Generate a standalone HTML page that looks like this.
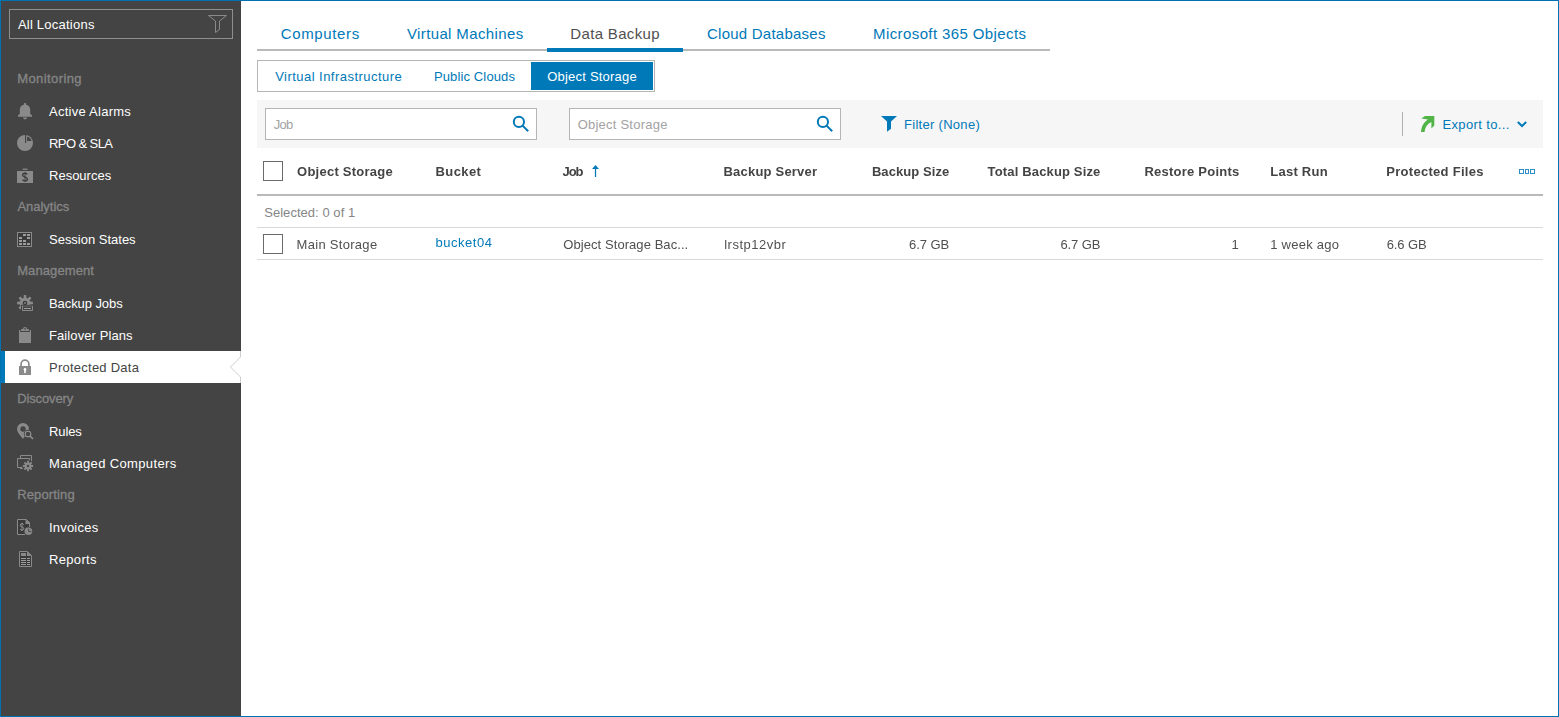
<!DOCTYPE html>
<html><head><meta charset="utf-8"><title>Protected Data</title>
<style>
*{box-sizing:border-box;margin:0;padding:0}
html,body{width:1559px;height:717px;overflow:hidden;background:#fff}
body{font-family:"Liberation Sans",sans-serif;font-size:13px;position:relative}
.t{position:absolute;white-space:pre;line-height:20px;height:20px}
.abs{position:absolute}
#side{left:0;top:0;width:241px;height:717px;background:#444444}
#frame{left:0;top:0;width:1559px;height:717px;border:1px solid #0072b1;pointer-events:none}
svg{position:absolute;overflow:visible}
</style></head>
<body>
<nav>
<div id="side" class="abs"></div>
<div class="abs" style="left:9px;top:9px;width:224px;height:30px;border:1px solid #8f8f8f"></div>
<svg style="left:0;top:0" width="241" height="45"><path d="M208.5,15.5H226.5L219.5,21V29.5L215.5,32.5V21Z" fill="none" stroke="#8a8a8a" stroke-width="1"/></svg>
<div class="abs" style="left:1px;top:351px;width:240px;height:32px;background:#fff;border-left:4px solid #0079b8"></div>
<svg style="left:225px;top:351px" width="16" height="32"><path d="M15.5,0V6L5.5,16L15.5,26V32" fill="none" stroke="#cfcfcf" stroke-width="1"/></svg>
<svg style="left:17px;top:103px" width="16" height="16" viewBox="0 0 16 16"><path fill="#8a8a8a" d="M7.1,0h1.8v1.4c2.5,0.5 4.3,2.6 4.3,5.2V11l1.8,1.2v1.6H1v-1.6L2.8,11V6.6c0,-2.6 1.8,-4.7 4.3,-5.2z M6,14.4h4c0,1 -0.9,1.8 -2,1.8s-2,-0.8 -2,-1.8z"/></svg>
<svg style="left:17px;top:135px" width="16" height="16" viewBox="0 0 16 16"><circle cx="8" cy="8" r="8" fill="#8a8a8a"/><rect x="8" y="-0.2" width="1.1" height="8.2" fill="#444444"/><path d="M10,1.4A6.3,6.3 0 0 1 14.6,6H10Z" fill="#444444"/></svg>
<svg style="left:17px;top:167px" width="16" height="16" viewBox="0 0 16 16"><rect x="0" y="4" width="16" height="12" fill="#8a8a8a"/><path d="M5.4,3V2.4q0,-1 1,-1h3.2q1,0 1,1V3z" fill="#8a8a8a" opacity="0.85"/><path d="M10.25,7.43 C9.50,6.51 8.62,6.20 8.00,6.20 C6.50,6.20 5.62,7.12 5.62,8.28 C5.62,9.43 7.00,9.74 8.00,10.05 C9.25,10.44 10.38,10.82 10.38,11.90 C10.38,13.13 9.25,13.90 8.00,13.90 C7.00,13.90 6.12,13.52 5.55,12.67" fill="none" stroke="#3c3c3c" stroke-width="1.35"/><path d="M8,5.3V14.8" stroke="#3c3c3c" stroke-width="0.9"/></svg>
<svg style="left:17px;top:231px" width="16" height="16" viewBox="0 0 16 16"><rect x="0.5" y="1.5" width="14" height="14" fill="#3a3a3a" stroke="#8a8a8a"/><rect x="6" y="3" width="3" height="2" fill="#9c9c9c"/><rect x="10" y="3" width="3" height="2" fill="#9c9c9c"/><rect x="2" y="6" width="3" height="2" fill="#9c9c9c"/><rect x="10" y="6" width="3" height="2" fill="#9c9c9c"/><rect x="2" y="9" width="3" height="2" fill="#9c9c9c"/><rect x="6" y="9" width="3" height="2" fill="#9c9c9c"/><rect x="2" y="12" width="3" height="2" fill="#9c9c9c"/><rect x="6" y="12" width="3" height="2" fill="#9c9c9c"/><rect x="10" y="12" width="3" height="2" fill="#9c9c9c"/></svg>
<svg style="left:17px;top:295px" width="16" height="16" viewBox="0 0 16 16"><path d="M6.61,2.99 L6.80,0.09 L9.20,0.09 L9.39,2.99 L10.56,3.48 L12.75,1.56 L14.44,3.25 L12.52,5.44 L13.01,6.61 L15.91,6.80 L15.91,9.20 L13.01,9.39 L12.52,10.56 L14.44,12.75 L12.75,14.44 L10.56,12.52 L9.39,13.01 L9.20,15.91 L6.80,15.91 L6.61,13.01 L5.44,12.52 L3.25,14.44 L1.56,12.75 L3.48,10.56 L2.99,9.39 L0.09,9.20 L0.09,6.80 L2.99,6.61 L3.48,5.44 L1.56,3.25 L3.25,1.56 L5.44,3.48Z" fill="#8a8a8a"/><circle cx="8" cy="8" r="2.3" fill="#3a3a3a"/><circle cx="8" cy="8" r="0.9" fill="#8a8a8a"/><rect x="4" y="9.8" width="13" height="7" fill="#444444"/><rect x="5" y="10.6" width="11" height="1" fill="#666"/><path d="M5.5,11V15.5H15.5V11" fill="none" stroke="#8a8a8a"/><rect x="7" y="13" width="7" height="1" fill="#9c9c9c"/><rect x="2.2" y="12" width="1.6" height="1.6" fill="#8a8a8a"/></svg>
<svg style="left:17px;top:327px" width="16" height="16" viewBox="0 0 16 16"><path fill="#8a8a8a" d="M2,3h1.2v2h9.6v-2H14V16H2z"/><rect x="4.2" y="2" width="7.6" height="2" fill="#8a8a8a"/><circle cx="8" cy="2" r="2" fill="#8a8a8a"/><circle cx="8" cy="1.9" r="0.8" fill="#444444"/></svg>
<svg style="left:17px;top:359px" width="16" height="16" viewBox="0 0 16 16"><rect x="2" y="7" width="12" height="9" fill="#8a8a8a"/><path d="M4.1,7.5V5a3.9,3.9 0 0 1 7.8,0V7.5" fill="none" stroke="#8a8a8a" stroke-width="1.7"/><circle cx="8" cy="10.4" r="1.3" fill="#fff"/><rect x="7.2" y="10.5" width="1.6" height="3.6" fill="#fff"/></svg>
<svg style="left:17px;top:423px" width="16" height="16" viewBox="0 0 16 16"><path fill="#8a8a8a" d="M6,0a6,6 0 0 1 6,6c0,3.5 -4,7 -6,10C4,13 0,9.5 0,6a6,6 0 0 1 6,-6z"/><circle cx="6" cy="6" r="2.7" fill="#444444"/><circle cx="11" cy="11" r="4.2" fill="#444444"/><circle cx="11" cy="11" r="2.8" fill="none" stroke="#959595" stroke-width="1.1"/><path d="M13,13L16,16" stroke="#959595" stroke-width="1.4"/></svg>
<svg style="left:17px;top:455px" width="16" height="16" viewBox="0 0 16 16"><path d="M3.5,3V0.5H14.5V6.5" fill="none" stroke="#8a8a8a"/><path d="M0.5,3.5H12.5V8M0.5,3.5V12.5H6" fill="none" stroke="#8a8a8a"/><path d="M3,13.5h3.2" stroke="#8a8a8a"/><circle cx="11" cy="11" r="6" fill="#444444"/><path d="M10.00,7.75 L10.12,5.87 L11.88,5.87 L12.00,7.75 L12.59,7.99 L14.00,6.75 L15.25,8.00 L14.01,9.41 L14.25,10.00 L16.13,10.12 L16.13,11.88 L14.25,12.00 L14.01,12.59 L15.25,14.00 L14.00,15.25 L12.59,14.01 L12.00,14.25 L11.88,16.13 L10.12,16.13 L10.00,14.25 L9.41,14.01 L8.00,15.25 L6.75,14.00 L7.99,12.59 L7.75,12.00 L5.87,11.88 L5.87,10.12 L7.75,10.00 L7.99,9.41 L6.75,8.00 L8.00,6.75 L9.41,7.99Z" fill="#8a8a8a"/><circle cx="11" cy="11" r="1.2" fill="#444444"/></svg>
<svg style="left:17px;top:519px" width="16" height="16" viewBox="0 0 16 16"><rect x="1" y="1" width="11.5" height="14.5" fill="#3a3a3a"/><path d="M0.5,0.5H9.5L12.5,3.5V9" fill="none" stroke="#8a8a8a"/><path d="M0.5,0.5V15.5H8" fill="none" stroke="#8a8a8a"/><path d="M8.5,0.5V5H13V4z" fill="#8a8a8a"/><path d="M6.71,5.66 C6.14,4.86 5.47,4.60 5.00,4.60 C3.86,4.60 3.20,5.39 3.20,6.38 C3.20,7.37 4.24,7.64 5.00,7.90 C5.95,8.23 6.80,8.56 6.80,9.48 C6.80,10.54 5.95,11.20 5.00,11.20 C4.24,11.20 3.58,10.87 3.14,10.14" fill="none" stroke="#9a9a9a" stroke-width="1.0"/><path d="M5,3.8V12.0" stroke="#9a9a9a" stroke-width="0.8"/><circle cx="11.4" cy="12.2" r="4.5" fill="#444444"/><circle cx="11.4" cy="12.2" r="3.8" fill="#8a8a8a"/><path d="M11.7,9.6V12.6H14.4" fill="none" stroke="#444444" stroke-width="0.9"/></svg>
<svg style="left:17px;top:551px" width="16" height="16" viewBox="0 0 16 16"><path d="M2.5,0.5H10.5L14.5,4.5V15.5H2.5Z" fill="#3a3a3a" stroke="#8a8a8a"/><path d="M10,0.5V5H14.5z" fill="#8a8a8a"/><rect x="4" y="2" width="5" height="3" fill="#8a8a8a"/><rect x="4" y="7" width="5" height="1" fill="#9c9c9c"/><rect x="10" y="7" width="3" height="1" fill="#9c9c9c"/><rect x="4" y="9" width="5" height="1" fill="#9c9c9c"/><rect x="10" y="9" width="3" height="1" fill="#9c9c9c"/><rect x="4" y="11" width="5" height="1" fill="#9c9c9c"/><rect x="10" y="11" width="3" height="1" fill="#9c9c9c"/><rect x="4" y="13" width="5" height="1" fill="#9c9c9c"/><rect x="10" y="13" width="3" height="1" fill="#9c9c9c"/></svg>
<span class="t" style="top:14.5px;font-size:13px;color:#ffffff;letter-spacing:0.234px;left:17.88px;">All Locations</span>
<span class="t" style="top:68.5px;font-size:13px;color:#868686;letter-spacing:0.411px;left:17.20px;-webkit-text-stroke:0.3px #868686;">Monitoring</span>
<span class="t" style="top:196.5px;font-size:13px;color:#868686;letter-spacing:-0.021px;left:17.38px;-webkit-text-stroke:0.3px #868686;">Analytics</span>
<span class="t" style="top:260.5px;font-size:13px;color:#868686;letter-spacing:0.100px;left:17.20px;-webkit-text-stroke:0.3px #868686;">Management</span>
<span class="t" style="top:388.5px;font-size:13px;color:#868686;letter-spacing:-0.135px;left:17.20px;-webkit-text-stroke:0.3px #868686;">Discovery</span>
<span class="t" style="top:484.5px;font-size:13px;color:#868686;letter-spacing:0.142px;left:17.20px;-webkit-text-stroke:0.3px #868686;">Reporting</span>
<span class="t" style="top:101.5px;font-size:13px;color:#ffffff;letter-spacing:0.259px;left:48.98px;">Active Alarms</span>
<span class="t" style="top:133.5px;font-size:13px;color:#ffffff;letter-spacing:-0.582px;left:49.00px;">RPO &amp; SLA</span>
<span class="t" style="top:165.5px;font-size:13px;color:#ffffff;letter-spacing:0.005px;left:49.00px;">Resources</span>
<span class="t" style="top:229.5px;font-size:13px;color:#ffffff;letter-spacing:-0.009px;left:49.00px;">Session States</span>
<span class="t" style="top:293.5px;font-size:13px;color:#ffffff;letter-spacing:-0.080px;left:49.00px;">Backup Jobs</span>
<span class="t" style="top:325.5px;font-size:13px;color:#ffffff;letter-spacing:0.096px;left:49.00px;">Failover Plans</span>
<span class="t" style="top:357.5px;font-size:13px;color:#444444;letter-spacing:0.243px;left:49.00px;">Protected Data</span>
<span class="t" style="top:421.5px;font-size:13px;color:#ffffff;letter-spacing:-0.115px;left:49.00px;">Rules</span>
<span class="t" style="top:453.5px;font-size:13px;color:#ffffff;letter-spacing:0.362px;left:49.00px;">Managed Computers</span>
<span class="t" style="top:517.5px;font-size:13px;color:#ffffff;letter-spacing:0.224px;left:48.91px;">Invoices</span>
<span class="t" style="top:549.5px;font-size:13px;color:#ffffff;letter-spacing:0.333px;left:49.00px;">Reports</span>
</nav>
<main>
<div class="abs" style="left:257px;top:49px;width:793px;height:2px;background:#b9b9b9"></div>
<div class="abs" style="left:547px;top:48px;width:136px;height:4px;background:#0079b8"></div>
<div class="abs" style="left:257px;top:60px;width:398px;height:32px;border:1px solid #b5b5b5;background:#fff"></div>
<div class="abs" style="left:531px;top:62px;width:122px;height:28px;background:#0079b8"></div>
<div class="abs" style="left:257px;top:100px;width:1286px;height:48px;background:#f6f6f6"></div>
<div class="abs" style="left:265px;top:108px;width:272px;height:32px;border:1px solid #b5b5b5;background:#fff"></div>
<div class="abs" style="left:569px;top:108px;width:272px;height:32px;border:1px solid #b5b5b5;background:#fff"></div>
<svg style="left:513px;top:116px" width="16" height="16"><circle cx="5.9" cy="5.9" r="5.1" fill="none" stroke="#0079b8" stroke-width="2"/><path d="M9.6,9.6L15.2,15.2" stroke="#0079b8" stroke-width="2"/></svg>
<svg style="left:817px;top:116px" width="16" height="16"><circle cx="5.9" cy="5.9" r="5.1" fill="none" stroke="#0079b8" stroke-width="2"/><path d="M9.6,9.6L15.2,15.2" stroke="#0079b8" stroke-width="2"/></svg>
<svg style="left:881px;top:116px" width="16" height="16"><path d="M0,0H16L10,5.5V12.8L6,15.8V5.5Z" fill="#0079b8"/></svg>
<div class="abs" style="left:1402px;top:112px;width:1px;height:24px;background:#b0b0b0"></div>
<svg style="left:1419px;top:116px" width="16" height="16"><path d="M6,0L15.3,0L15.3,9.4L12.4,12.6L12.4,6C8.8,7.5 6,11 5.6,16L2,16C2.4,10 5,5.8 9,3.4L2.3,2.5Z" fill="#50b447"/></svg>
<svg style="left:1516px;top:120px" width="12" height="8"><path d="M1.8,2L6,6L10.2,2" fill="none" stroke="#0079b8" stroke-width="2"/></svg>
<div class="abs" style="left:263px;top:161px;width:20px;height:20px;border:1px solid #6a6a6a;background:#fff"></div>
<div class="abs" style="left:263px;top:234px;width:20px;height:20px;border:1px solid #6a6a6a;background:#fff"></div>
<svg style="left:591px;top:164px" width="10" height="14"><path d="M1,5L4.5,1L8,5Z" fill="#0079b8"/><rect x="3.9" y="4.5" width="1.25" height="8.5" fill="#0079b8"/></svg>
<svg style="left:1519px;top:169px" width="16" height="6"><rect x="0.5" y="0.5" width="4" height="4" fill="none" stroke="#2d8fc6" stroke-width="1"/><rect x="6.5" y="0.5" width="3" height="4" fill="none" stroke="#2d8fc6" stroke-width="1"/><rect x="11.5" y="0.5" width="4" height="4" fill="none" stroke="#2d8fc6" stroke-width="1"/></svg>
<div class="abs" style="left:257px;top:194px;width:1286px;height:2px;background:#b9b9b9"></div>
<div class="abs" style="left:257px;top:227px;width:1286px;height:1px;background:#d9d9d9"></div>
<div class="abs" style="left:257px;top:259px;width:1286px;height:1px;background:#d9d9d9"></div>
<span class="t" style="top:24.0px;font-size:15px;color:#0079b8;letter-spacing:0.623px;left:280.80px;">Computers</span>
<span class="t" style="top:24.0px;font-size:15px;color:#0079b8;letter-spacing:0.377px;left:406.95px;">Virtual Machines</span>
<span class="t" style="top:24.0px;font-size:15px;color:#505050;letter-spacing:0.331px;left:570.31px;">Data Backup</span>
<span class="t" style="top:24.0px;font-size:15px;color:#0079b8;letter-spacing:0.239px;left:707.00px;">Cloud Databases</span>
<span class="t" style="top:24.0px;font-size:15px;color:#0079b8;letter-spacing:0.392px;left:873.11px;">Microsoft 365 Objects</span>
<span class="t" style="top:66.5px;font-size:13px;color:#0079b8;letter-spacing:0.468px;left:275.14px;">Virtual Infrastructure</span>
<span class="t" style="top:66.5px;font-size:13px;color:#0079b8;letter-spacing:0.133px;left:433.90px;">Public Clouds</span>
<span class="t" style="top:66.5px;font-size:13px;color:#ffffff;letter-spacing:0.210px;left:547.24px;">Object Storage</span>
<span class="t" style="top:114.5px;font-size:13px;color:#a3a3a3;letter-spacing:-0.650px;left:273.65px;">Job</span>
<span class="t" style="top:114.5px;font-size:13px;color:#a3a3a3;letter-spacing:0.233px;left:577.64px;">Object Storage</span>
<span class="t" style="top:114.5px;font-size:13px;color:#0079b8;letter-spacing:0.292px;left:904.00px;">Filter (None)</span>
<span class="t" style="top:114.5px;font-size:13px;color:#0079b8;letter-spacing:0.380px;left:1442.40px;">Export to...</span>
<span class="t" style="top:202.5px;font-size:13px;color:#858585;letter-spacing:0.043px;left:264.20px;">Selected: 0 of 1</span>
</main>
<div id="frame" class="abs"></div>
<div class="abs" style="left:257px;top:150px;width:1286px;height:120px;will-change:transform">
<span class="t" style="top:11.5px;font-size:13px;color:#444444;font-weight:700;letter-spacing:0.250px;left:40.05px;">Object Storage</span>
<span class="t" style="top:11.5px;font-size:13px;color:#444444;font-weight:700;letter-spacing:0.416px;left:178.50px;">Bucket</span>
<span class="t" style="top:11.5px;font-size:13px;color:#444444;font-weight:700;letter-spacing:-1.107px;left:305.61px;">Job</span>
<span class="t" style="top:11.5px;font-size:13px;color:#444444;font-weight:700;letter-spacing:0.208px;left:466.50px;">Backup Server</span>
<span class="t" style="top:11.5px;font-size:13px;color:#444444;font-weight:700;letter-spacing:0.080px;left:614.90px;">Backup Size</span>
<span class="t" style="top:11.5px;font-size:13px;color:#444444;font-weight:700;letter-spacing:0.152px;left:730.60px;">Total Backup Size</span>
<span class="t" style="top:11.5px;font-size:13px;color:#444444;font-weight:700;letter-spacing:0.237px;left:887.40px;">Restore Points</span>
<span class="t" style="top:11.5px;font-size:13px;color:#444444;font-weight:700;letter-spacing:0.243px;left:1013.30px;">Last Run</span>
<span class="t" style="top:11.5px;font-size:13px;color:#444444;font-weight:700;letter-spacing:0.281px;left:1129.30px;">Protected Files</span>
<span class="t" style="top:84.5px;font-size:13px;color:#505050;letter-spacing:0.291px;left:39.60px;">Main Storage</span>
<span class="t" style="top:82.5px;font-size:13px;color:#0079b8;letter-spacing:0.532px;left:178.40px;">bucket04</span>
<span class="t" style="top:84.5px;font-size:13px;color:#505050;letter-spacing:0.065px;left:306.34px;">Object Storage Bac...</span>
<span class="t" style="top:84.5px;font-size:13px;color:#505050;letter-spacing:0.511px;left:467.20px;">lrstp12vbr</span>
<span class="t" style="top:84.5px;font-size:13px;color:#505050;letter-spacing:-0.067px;left:652.01px;">6.7 GB</span>
<span class="t" style="top:84.5px;font-size:13px;color:#505050;letter-spacing:-0.067px;left:803.41px;">6.7 GB</span>
<span class="t" style="top:84.5px;font-size:13px;color:#505050;left:974.44px;">1</span>
<span class="t" style="top:84.5px;font-size:13px;color:#505050;letter-spacing:0.233px;left:1013.30px;">1 week ago</span>
<span class="t" style="top:84.5px;font-size:13px;color:#505050;letter-spacing:-0.087px;left:1129.71px;">6.6 GB</span>
</div>
</body></html>
